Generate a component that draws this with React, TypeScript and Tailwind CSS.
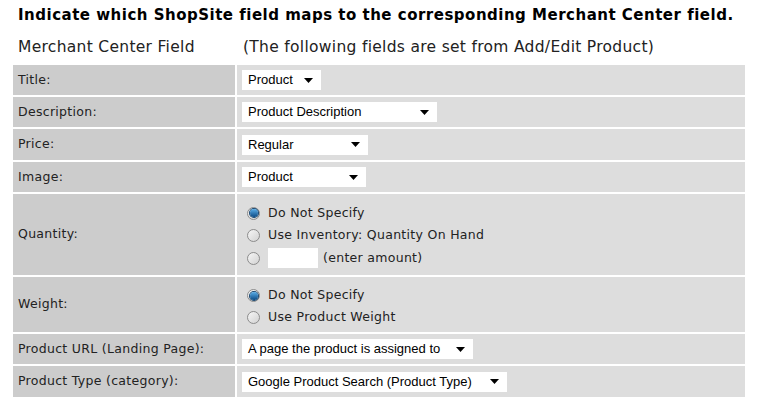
import React from 'react';

const verdana = { fontFamily: '"DejaVu Sans", Verdana, sans-serif' };
const arial = { fontFamily: '"Liberation Sans", Arial, sans-serif' };

function Select({ value, width }: { value: string; width: number }) {
  return (
    <div
      className="flex items-center justify-between h-[20px] bg-white pl-[6px] pr-[8px] text-[13px] text-black tracking-normal"
      style={{ ...arial, width }}
    >
      <span className="whitespace-nowrap">{value}</span>
      <svg width="9" height="5" viewBox="0 0 9 5" className="shrink-0">
        <path d="M0 0 H9 L4.5 5 Z" fill="#000" />
      </svg>
    </div>
  );
}

function Radio({ checked }: { checked?: boolean }) {
  return (
    <span className="relative inline-flex items-center justify-center w-[13px] h-[13px] rounded-full border border-[#8c8c8c] bg-gradient-to-br from-[#f6f6f6] to-[#d2d2d2] ml-[5px] mr-[8px] shrink-0">
      {checked && (
        <span className="w-[8px] h-[8px] rounded-full bg-gradient-to-b from-[#5aaee8] to-[#0b4c86] ring-1 ring-[#16456f]" />
      )}
    </span>
  );
}

function Row({ label, h, children }: { label: string; h: number; children: React.ReactNode }) {
  return (
    <div className="flex gap-[2px]" style={{ height: h }}>
      <div className="w-[222px] bg-[#cccccc] flex items-center pl-[5px] text-[12.5px] tracking-[0.3px] text-[#222]">{label}</div>
      <div className="flex-1 bg-[#dddddd] flex items-center pl-[5px]">{children}</div>
    </div>
  );
}

export default function App() {
  return (
    <div className="w-[767px] h-[413px] bg-white text-black overflow-hidden" style={verdana}>
      <h1 className="pl-[18px] pt-[5px] text-[15px] font-bold leading-[20px] tracking-[0.5px] whitespace-nowrap">
        Indicate which ShopSite field maps to the corresponding Merchant Center field.
      </h1>
      <div className="flex pt-[12px] h-[40px] text-[15.5px] text-[#222] leading-[20px] tracking-[0.3px]">
        <div className="w-[243px] pl-[18px]">Merchant Center Field</div>
        <div>(The following fields are set from Add/Edit Product)</div>
      </div>
      <div className="ml-[13px] w-[732px] flex flex-col gap-[2px]">
        <Row label="Title:" h={30}>
          <Select value="Product" width={79} />
        </Row>
        <Row label="Description:" h={30}>
          <Select value="Product Description" width={195} />
        </Row>
        <Row label="Price:" h={31}>
          <Select value="Regular" width={126} />
        </Row>
        <Row label="Image:" h={30}>
          <Select value="Product" width={124} />
        </Row>
        <Row label="Quantity:" h={81}>
          <div className="flex flex-col mt-[3px] text-[12.5px] tracking-[0.3px] text-[#222]">
            <label className="flex items-center h-[22px]"><Radio checked />Do Not Specify</label>
            <label className="flex items-center h-[22px]"><Radio />Use Inventory: Quantity On Hand</label>
            <label className="flex items-center h-[24px]">
              <Radio />
              <span className="w-[50px] h-[20px] bg-white mr-[5px]" />
              (enter amount)
            </label>
          </div>
        </Row>
        <Row label="Weight:" h={55}>
          <div className="flex flex-col mt-[4px] text-[12.5px] tracking-[0.3px] text-[#222]">
            <label className="flex items-center h-[22px]"><Radio checked />Do Not Specify</label>
            <label className="flex items-center h-[22px]"><Radio />Use Product Weight</label>
          </div>
        </Row>
        <Row label="Product URL (Landing Page):" h={30}>
          <Select value="A page the product is assigned to" width={231} />
        </Row>
        <Row label="Product Type (category):" h={31}>
          <Select value="Google Product Search (Product Type)" width={265} />
        </Row>
      </div>
    </div>
  );
}
